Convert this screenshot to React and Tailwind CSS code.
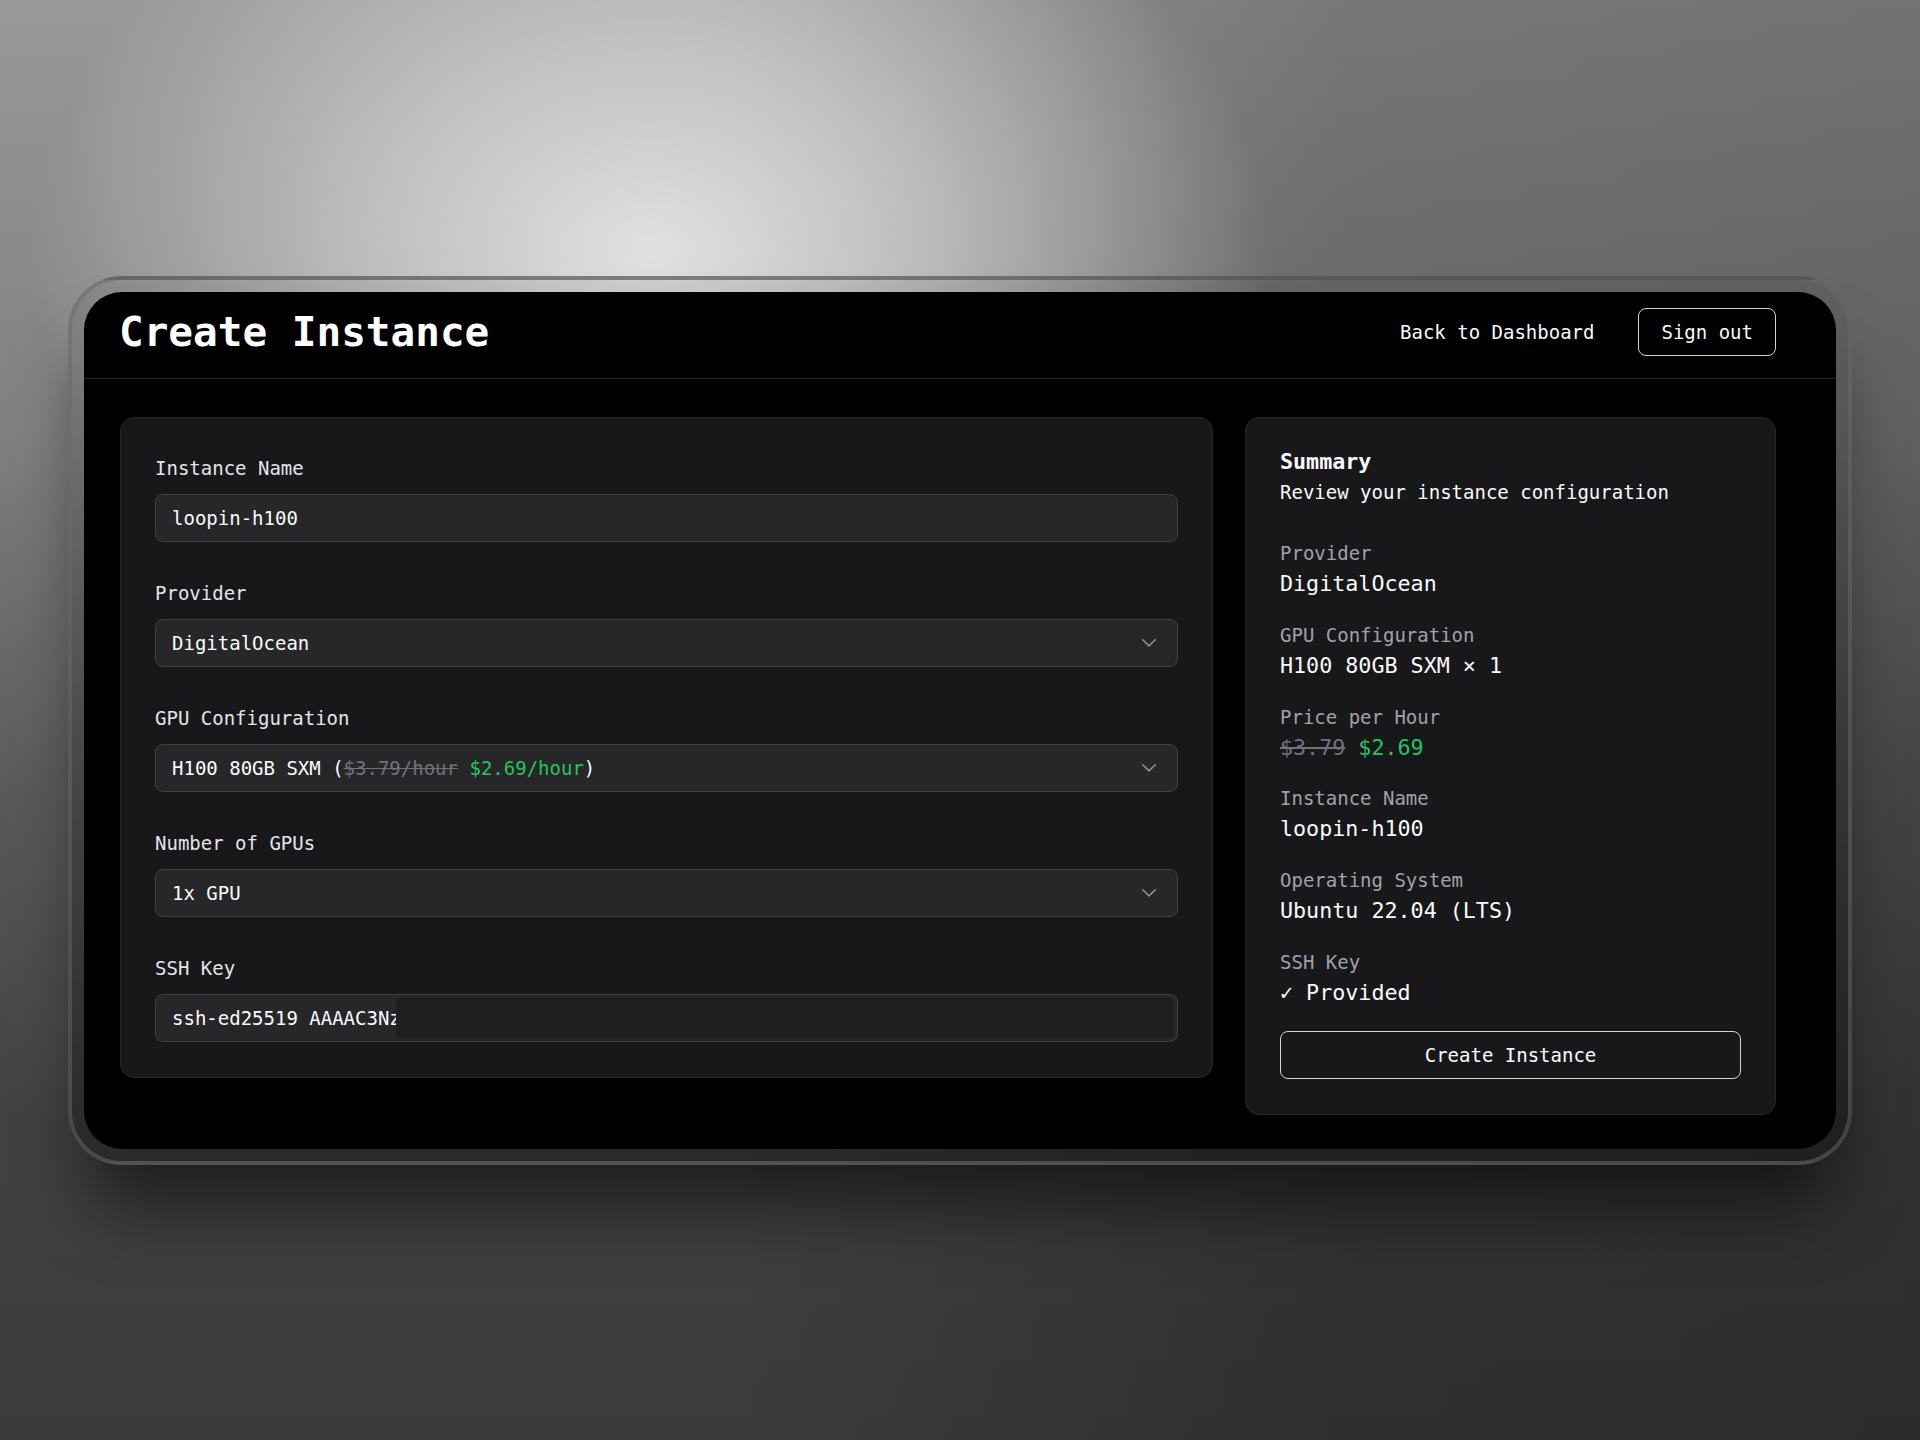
import React from "react";

function Chevron() {
  return (
    <svg width="14" height="8" viewBox="0 0 14 8" fill="none" className="shrink-0">
      <path d="M0.75 0.75 L7 6.9 L13.25 0.75" stroke="#8f8f94" strokeWidth="1.5" strokeLinecap="round" strokeLinejoin="round" />
    </svg>
  );
}

function Field({ label, children, first }) {
  return (
    <div className={first ? "" : "mt-[42px]"}>
      <div className="text-[19px] leading-[19px] text-[#e4e4e7]">{label}</div>
      <div className="mt-[16px]">{children}</div>
    </div>
  );
}

function SelectBox({ children }) {
  return (
    <div className="flex h-[48px] items-center justify-between rounded-[8px] border border-[#3f3f46] bg-[#27272a] pl-[16px] pr-[21px] text-[19px] text-[#fafafa]">
      <span className="whitespace-nowrap">{children}</span>
      <Chevron />
    </div>
  );
}

function SummaryItem({ label, children }) {
  return (
    <div>
      <div className="text-[19px] leading-[27px] text-[#a1a1aa]">{label}</div>
      <div className="text-[21.7px] leading-[33px] text-[#fafafa]">{children}</div>
    </div>
  );
}

export default function App() {
  return (
    <div className="min-h-[1440px] w-full overflow-hidden bg-[#3b3c3d] bg-[image:radial-gradient(ellipse_620px_440px_at_650px_250px,rgba(224,225,225,1)_0%,rgba(224,225,225,0.6)_45%,rgba(224,225,225,0)_100%),linear-gradient(to_right,rgba(0,0,0,0)_0%,rgba(0,0,0,0)_38%,rgba(0,0,0,0.22)_70%,rgba(0,0,0,0.25)_100%),linear-gradient(to_bottom,#999999_0%,#808080_30%,#5a5a5a_55%,#404142_78%,#3a3b3c_100%)] pt-[276px] font-['DejaVu_Sans_Mono',monospace]">
      <div className="mx-auto w-[1784px] rounded-[54px] border-[4px] border-[rgba(105,105,105,0.5)] bg-[linear-gradient(to_bottom,rgba(0,0,0,0.07),rgba(0,0,0,0.35))] p-[12px] shadow-[0_60px_70px_-20px_rgba(0,0,0,0.55)]">
        <div className="overflow-hidden rounded-[38px] bg-black">
          <header className="flex h-[87px] items-center justify-between border-b border-[#27272a] pb-[6px] pl-[35px] pr-[60px]">
            <h1 className="text-[41px] font-bold leading-[49px] text-white">Create Instance</h1>
            <div className="flex items-center gap-[44px]">
              <span className="text-[19px] text-[#fafafa]">Back to Dashboard</span>
              <button className="h-[48px] rounded-[8px] border border-[#d4d4d8] bg-black px-[22px] text-[19px] text-[#fafafa]">
                Sign out
              </button>
            </div>
          </header>

          <main className="flex items-start gap-[32px] pb-[34px] pl-[36px] pr-[60px] pt-[38px]">
            <section className="flex-1 rounded-[14px] border border-[#27272a] bg-[#18181b] px-[34px] pb-[35px] pt-[41px]">
              <Field label="Instance Name" first>
                <div className="flex h-[48px] items-center rounded-[8px] border border-[#3f3f46] bg-[#27272a] px-[16px] text-[19px] text-[#fafafa]">
                  loopin-h100
                </div>
              </Field>
              <Field label="Provider">
                <SelectBox>DigitalOcean</SelectBox>
              </Field>
              <Field label="GPU Configuration">
                <SelectBox>
                  H100 80GB SXM (<span className="text-[#71717a] line-through">$3.79/hour</span>{" "}
                  <span className="text-[#22c55e]">$2.69/hour</span>)
                </SelectBox>
              </Field>
              <Field label="Number of GPUs">
                <SelectBox>1x GPU</SelectBox>
              </Field>
              <Field label="SSH Key">
                <div className="flex h-[48px] items-stretch rounded-[8px] border border-[#3f3f46] bg-[#27272a] pl-[16px] text-[19px] text-[#fafafa]">
                  <span className="w-[224px] self-center overflow-hidden whitespace-nowrap">
                    ssh-ed25519 AAAAC3NzaC1lZDI1NTE5AAAAI
                  </span>
                  <div className="my-[3px] mr-[3px] flex-1 rounded-[4px] bg-[#1e1e21]" />
                </div>
              </Field>
            </section>

            <aside className="w-[531px] rounded-[14px] border border-[#27272a] bg-[#18181b] px-[34px] pb-[35px] pt-[33px]">
              <div className="text-[21.7px] font-bold leading-[22px] text-[#fafafa]">Summary</div>
              <div className="mt-[6px] text-[19px] leading-[27px] text-[#fafafa]">Review your instance configuration</div>
              <div className="mt-[34px] flex flex-col gap-[21.8px]">
                <SummaryItem label="Provider">DigitalOcean</SummaryItem>
                <SummaryItem label="GPU Configuration">H100 80GB SXM × 1</SummaryItem>
                <SummaryItem label="Price per Hour">
                  <span className="text-[#71717a] line-through">$3.79</span>{" "}
                  <span className="text-[#22c55e]">$2.69</span>
                </SummaryItem>
                <SummaryItem label="Instance Name">loopin-h100</SummaryItem>
                <SummaryItem label="Operating System">Ubuntu 22.04 (LTS)</SummaryItem>
                <SummaryItem label="SSH Key">✓ Provided</SummaryItem>
              </div>
              <button className="mt-[22.5px] h-[48px] w-full rounded-[8px] border border-[#d4d4d8] bg-[#18181b] text-[19px] text-[#fafafa]">
                Create Instance
              </button>
            </aside>
          </main>
        </div>
      </div>
    </div>
  );
}
